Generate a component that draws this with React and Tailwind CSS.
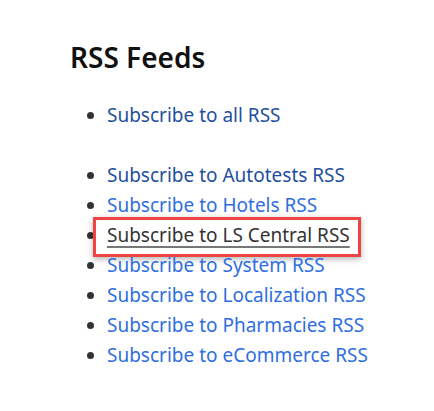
const groups = [
  [{ label: "Subscribe to all RSS", visited: true }],
  [
    { label: "Subscribe to Autotests RSS", visited: true },
    { label: "Subscribe to Hotels RSS" },
    { label: "Subscribe to LS Central RSS", active: true },
    { label: "Subscribe to System RSS" },
    { label: "Subscribe to Localization RSS" },
    { label: "Subscribe to Pharmacies RSS" },
    { label: "Subscribe to eCommerce RSS" }
  ]
];

function FeedLink({ item }) {
  if (item.active) {
    return (
      <span className="-mb-[7px] -ml-[14px] -mr-[11px] -mt-[3px] inline-block border-[3px] border-[#ef4444] pb-[4px] pl-[11px] pr-[8px] pt-0 shadow-[0_2px_6px_rgba(0,0,0,0.3)]">
        <a href="#" className="text-[#333] underline decoration-[#777] decoration-2 underline-offset-4">
          {item.label}
        </a>
      </span>
    );
  }
  return (
    <a href="#" className={item.visited ? "text-[#1f4f9e]" : "text-[#2f6ee0]"}>
      {item.label}
    </a>
  );
}

export default function App() {
  return (
    <div className="min-h-[411px] bg-white pl-[70px] pt-[39px] font-['Noto_Sans',sans-serif]">
      <h1 className="text-[28px] font-semibold leading-[36px] text-[#111]">RSS Feeds</h1>
      <div className="mt-[25px] flex flex-col gap-[30px]">
        {groups.map((group, index) => (
          <ul key={index} className="list-disc pl-[37px] text-[19px] leading-[30px] marker:text-[#333]">
            {group.map((item) => (
              <li key={item.label}>
                <FeedLink item={item} />
              </li>
            ))}
          </ul>
        ))}
      </div>
    </div>
  );
}
